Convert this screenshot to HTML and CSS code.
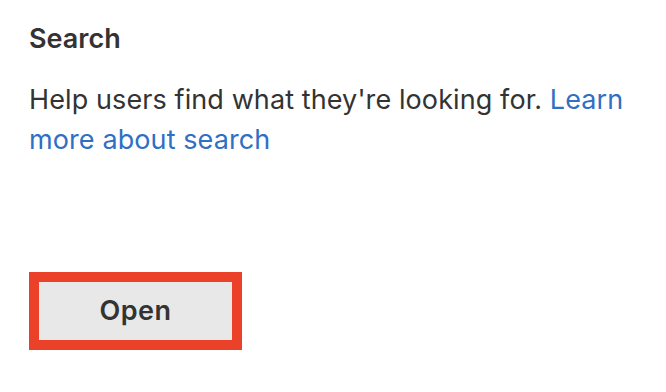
FILE: index.html
```html
<!DOCTYPE html>
<html lang="en">
<head>
    <meta charset="UTF-8">
    <meta name="viewport" content="width=device-width, initial-scale=1.0">
    <title>Search</title>
    <link rel="stylesheet" href="styles.css">
</head>
<body>
    <div class="card">
        <h3 class="card-title">Search</h3>
        <p class="card-text">Help users find what they're looking for. <a href="#">Learn more about search</a></p>
        <div class="card-actions">
            <button class="open-btn">Open</button>
        </div>
    </div>
</body>
</html>
```

FILE: styles.css
```css
*{
    box-sizing: border-box;
    font-family: Inter, "Liberation Sans", sans-serif;
}
body{
    margin: 0;
    padding: 0;
    background-color: #fff;
}
.card{
    width: 666px;
    height: 392px;
    padding: 23px 29px 0;
    display: flex;
    flex-direction: column;
}
.card-title{
    margin: 0;
    font-size: 27px;
    font-weight: 600;
    line-height: 32px;
    color: #333;
}
.card-text{
    margin: 25px 0 0;
    font-size: 27px;
    letter-spacing: 0.1px;
    line-height: 40px;
    color: #333;
}
.card-text a{
    color: #2f6fc4;
    text-decoration: none;
}
.card-actions{
    margin-top: auto;
    padding-bottom: 42px;
}
.open-btn{
    width: 213px;
    height: 78px;
    border: 10px solid #ea4128;
    background-color: #e8e8e8;
    font-size: 27px;
    font-weight: 600;
    letter-spacing: 0.5px;
    color: #333;
    padding: 0 0 2px;
}
```
